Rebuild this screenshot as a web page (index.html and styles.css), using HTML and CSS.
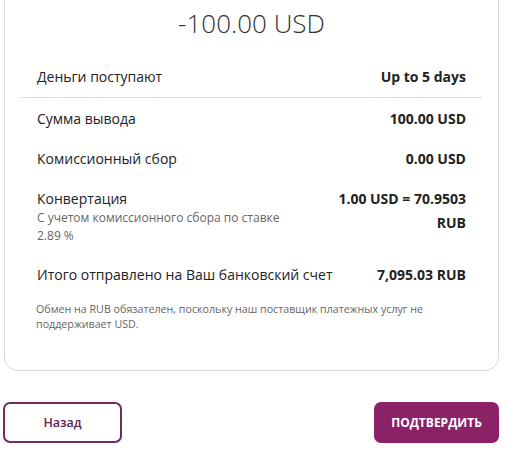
FILE: index.html
```html
<!DOCTYPE html>
<html lang="ru">
<head>
    <meta charset="UTF-8">
    <meta name="viewport" content="width=device-width, initial-scale=1.0">
    <title>Подтверждение вывода</title>
    <link rel="stylesheet" href="styles.css">
</head>
<body>
    <div class="page">
        <div class="card">
            <div class="amount">-100.00 USD</div>

            <div class="row first">
                <span class="label">Деньги поступают</span>
                <span class="value">Up to 5 days</span>
            </div>
            <div class="divider"></div>

            <div class="details">
                <div class="row">
                    <span class="label">Сумма вывода</span>
                    <span class="value">100.00 USD</span>
                </div>
                <div class="row">
                    <span class="label">Комиссионный сбор</span>
                    <span class="value">0.00 USD</span>
                </div>
                <div class="row">
                    <div class="label">
                        Конвертация
                        <div class="hint">С учетом комиссионного сбора по ставке 2.89 %</div>
                    </div>
                    <span class="value rate">1.00 USD = 70.9503 RUB</span>
                </div>
                <div class="row">
                    <span class="label">Итого отправлено на Ваш банковский счет</span>
                    <span class="value">7,095.03 RUB</span>
                </div>
            </div>

            <p class="note">Обмен на RUB обязателен, поскольку наш поставщик платежных услуг не поддерживает USD.</p>
        </div>

        <div class="actions">
            <button class="btn back">Назад</button>
            <button class="btn confirm">ПОДТВЕРДИТЬ</button>
        </div>
    </div>
</body>
</html>
```

FILE: styles.css
```css
body {
    margin: 0;
    background-color: #fff;
    color: #222;
    font-family: "Open Sans", "Noto Sans", sans-serif;
    font-size: 14px;
}

.page {
    padding: 0 8px 0 4px;
}

.card {
    margin-top: -20px;
    border: 1px solid #d9d9d9;
    border-radius: 14px;
    padding: 22px 16px 38px;
}

.amount {
    text-align: center;
    font-size: 26px;
    font-weight: 300;
    line-height: 40px;
    color: #333;
}

.row {
    display: flex;
    justify-content: space-between;
    align-items: flex-start;
    padding: 0 16px;
    line-height: 20px;
}

.row.first {
    margin-top: 24px;
    padding-bottom: 10px;
}

.divider {
    height: 1px;
    background-color: #dedede;
}

.details {
    display: flex;
    flex-direction: column;
    gap: 20px;
    margin-top: 11px;
}

.value {
    font-weight: 700;
    text-align: right;
    max-width: 140px;
}

.rate {
    line-height: 24px;
    margin-top: -2px;
}

.hint {
    max-width: 260px;
    font-size: 12px;
    line-height: 18px;
    color: #666;
}

.note {
    margin: 17px 0 0;
    padding: 0 15px;
    font-size: 10.7px;
    line-height: 15px;
    color: #666;
}

.actions {
    display: flex;
    justify-content: space-between;
    margin-top: 31px;
}

.btn {
    height: 41px;
    border-radius: 7px;
    font-family: inherit;
    font-size: 12.5px;
    font-weight: 600;
    cursor: pointer;
}

.back {
    width: 119px;
    margin-left: -1px;
    background-color: #fff;
    border: 2px solid #722b5f;
    color: #5e2450;
}

.confirm {
    width: 125px;
    border: none;
    background-color: #8b2166;
    color: #fff;
    font-size: 12px;
    font-weight: 700;
}
```
